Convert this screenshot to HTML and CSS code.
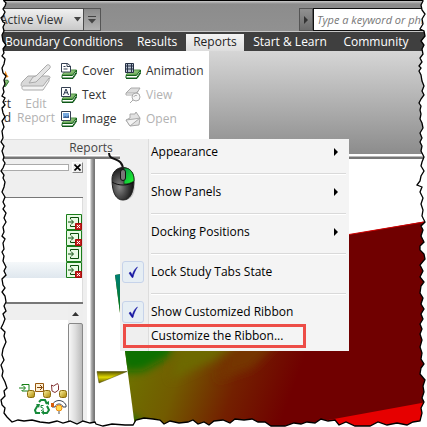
FILE: index.html
```html
<!DOCTYPE html>
<html lang="en">
<head>
<meta charset="utf-8">
<title>Reports</title>
<link rel="stylesheet" href="styles.css">
</head>
<body>
<svg class="defs" aria-hidden="true">
  <defs>
    <linearGradient id="pad" x1="0" y1="0" x2="1" y2="1"><stop offset="0" stop-color="#b5dca0"/><stop offset="1" stop-color="#5a9e47"/></linearGradient>
    <linearGradient id="coin" x1="0" y1="0" x2="1" y2="1"><stop offset="0" stop-color="#fff3a0"/><stop offset="1" stop-color="#a98500"/></linearGradient>
    <symbol id="book" viewBox="0 0 16 16">
      <path d="M5 7h10.500l-4 5H1z" fill="url(#pad)" stroke="#4c8f45"/>
      <path d="M1 12.500h10.500L15.500 7v2l-4 6H1z" fill="#fff" stroke="#14631a"/>
      <path d="M1 15.500h11l4-6" fill="none" stroke="#0d5717"/>
    </symbol>
    <symbol id="import" viewBox="0 0 16 16">
      <path d="M.5.500h15v15H.5z" fill="#e8fae4" stroke="#1a7d1a"/>
      <path d="M4.500 5V3.500h8v9h-8V11M2 8h5M5 5.500L7.500 8 5 10.500" fill="none" stroke="#0b4d0b"/>
    </symbol>
    <symbol id="fail" viewBox="0 0 16 16">
      <path d="M9.500 9.500h6v6h-6z" fill="#c52020" stroke="#a80d0d"/>
      <path d="M11 11l3 3M14 11l-3 3" stroke="#fff"/>
    </symbol>
    <symbol id="gold" viewBox="0 0 8 8"><rect x=".5" y=".5" width="7" height="7" rx="2" fill="url(#coin)" stroke="#8a6a0c"/></symbol>
    <symbol id="arrow" viewBox="0 0 4 8"><path d="M0 0l4 4-4 4z" fill="#000"/></symbol>
    <symbol id="tick" viewBox="0 0 20 20"><path d="M6 11l1.500-1 1.800 3.200C10 10 12 6.500 14.500 5 12.500 8 10.800 11.500 10 15.500H9z" fill="#1414a0" stroke="#1414a0" stroke-width=".5"/></symbol>
  </defs>
</svg>

<div class="app">
  <header class="titlebar">
    <div class="combo">
      <select aria-label="View"><option>Active View</option></select>
      <svg class="caret" viewBox="0 0 7 5"><path d="M0 0h7L3.500 4.500z" fill="#444"/></svg>
      <button class="more" aria-label="More commands"><svg viewBox="0 0 8 8"><path d="M0 .500h8" stroke="#444"/><path d="M0 3h8L4 7.500z" fill="#444"/></svg></button>
    </div>
    <div class="search">
      <button aria-label="Expand search"><svg viewBox="0 0 4 8"><path d="M0 0l4 4-4 4z" fill="#333"/></svg></button>
      <input type="text" aria-label="Search" placeholder="Type a keyword or phrase">
    </div>
  </header>

  <nav class="tabs">
    <a href="#">Boundary Conditions</a>
    <a href="#">Results</a>
    <a href="#" class="active">Reports</a>
    <a href="#">Start &amp; Learn</a>
    <a href="#">Community</a>
  </nav>

  <section class="ribbon">
    <div class="group">
      <div class="tools">
        <button class="big clipped">
          <svg viewBox="0 0 14 32"><path d="M3 10l3 2 1-4 2 5 2 3-4 1-4 2z" fill="#ef8a1b"/><path d="M0 20h10l1 2-4 6H0z" fill="url(#pad)" stroke="#14631a"/></svg>
          <span>rt<br>d</span>
        </button>
        <button class="big" disabled>
          <svg viewBox="0 0 32 32">
            <path d="M8 15h19c3 0 4 1 2 3l-6 8H4c-4 0-3-3-2-5z" fill="#d9d9d9" stroke="#a9a9a9"/>
            <path d="M3 25c-2 1-1 4 1 4h19l6-9v-3l-6 8H4z" fill="#f4f4f4" stroke="#aaa"/>
            <path d="M9 22l4-6 3-1 11-11c2-1 4 1 3 3L19 18l-3 3z" fill="#e4e4e4" stroke="#aaa"/>
          </svg>
          <span>Edit<br>Report</span>
        </button>
        <div class="smalls">
          <button><svg viewBox="0 0 16 16"><use href="#book"/><path d="M.5.500h6L9.500 3v6h-9z" fill="#fff" stroke="#354052"/><path d="M6 0v3.500h3M2.500 3.500h2M2.500 6h4" fill="none" stroke="#354052"/></svg>Cover</button>
          <button><svg viewBox="0 0 16 16"><use href="#book"/><path d="M.5.500h9v9h-9z" fill="#fff" stroke="#354052"/><path d="M2.500 8L5 2l2.500 6M3.500 5.800h3" fill="none" stroke="#26334a"/></svg>Text</button>
          <button><svg viewBox="0 0 16 16"><use href="#book"/><path d="M.5.500h9v9h-9z" fill="#fff" stroke="#354052"/><path d="M2 2h6v5H2z" fill="#76a9df"/><path d="M2 7l2-2 2 1 2-2v3z" fill="#3a5f94"/></svg>Image</button>
        </div>
        <div class="smalls">
          <button><svg viewBox="0 0 16 16"><use href="#book"/><path d="M.5.500h8v9h-8z" fill="#b9c3d2" stroke="#263145"/><path d="M2.500 0v9M6.500 0v9M0 3h9M0 6h9" fill="none" stroke="#263145"/></svg>Animation</button>
          <button disabled><svg viewBox="0 0 16 16"><path d="M6 1h9l-3 5H1z" fill="#ddd" stroke="#aaa"/><path d="M1 6v2h8l5-5" fill="none" stroke="#aaa"/><circle cx="11" cy="10" r="4" fill="#f6f6f6" stroke="#aaa"/><path d="M9 10c0-2 3-2 3-1M8 13l-3 3" fill="none" stroke="#aaa"/></svg>View</button>
          <button disabled><svg viewBox="0 0 16 16"><path d="M1 9l4-2V3h5l1-2 4 6-1 7-9 1z" fill="#e2e2e2" stroke="#aaa"/><path d="M1 9l4 6 10-8-6 1z" fill="#f4f4f4" stroke="#aaa"/></svg>Open</button>
        </div>
      </div>
      <div class="caption">Reports</div>
    </div>
  </section>

  <main class="work">
    <aside class="dock">
      <div class="grip"><span></span><button aria-label="Close"><svg viewBox="0 0 7 7"><path d="M.5.500l6 6M6.500.500l-6 6" stroke="#000" stroke-width="1.600"/></svg></button></div>
      <ul class="tree">
        <li><svg viewBox="0 0 16 16"><use href="#import"/><use href="#fail"/></svg></li>
        <li><svg viewBox="0 0 16 16"><use href="#import"/><use href="#fail"/></svg></li>
        <li><svg viewBox="0 0 16 16"><use href="#import"/></svg></li>
        <li class="selected"><svg viewBox="0 0 16 16"><use href="#import"/><use href="#fail"/></svg></li>
      </ul>
      <div class="list">
        <div class="content">
          <svg class="status" viewBox="0 0 48 32">
            <path d="M3 3V1.500h7V8H3V7M0 5h6M4 2.500L6.500 5 4 7.500" fill="none" stroke="#168016"/>
            <path d="M16.500.500h8v8h-8z" fill="#fff1d6" stroke="#96580f"/><path d="M18 4.500h5M21 2l2.500 2.500L21 7" fill="none" stroke="#7d4208"/>
            <path d="M32.500 2l2 1 4-2.500 1 2V7L36 9.500 33 8z" fill="#fff" stroke="#853535"/>
            <use href="#gold" x="8" y="7" width="8" height="8"/><use href="#gold" x="24" y="7" width="8" height="8"/><use href="#gold" x="40" y="7" width="8" height="8"/>
            <path d="M20 19l2-2h4l2 4M28 23l2 4-2 3h-4M21 30h-4l-1-3 3-5" fill="none" stroke="#168a3a" stroke-width="2"/>
            <path d="M26 20l4 2v-4zM25 27v5l-3-2.500zM17 21l4 0-1 4z" fill="#168a3a"/>
            <path d="M24.500 22.500h-2.500v2c3-.5 3 3 0 3" fill="none" stroke="#168a3a"/>
            <path d="M33 24v-2c3-6 11-6 14 0v2h-3c-1-4-7-4-8 0z" fill="#fff" stroke="#3b4350"/><path d="M32 20h3v4h-3z" fill="#d75c0a"/>
            <circle cx="40" cy="25" r="3" fill="#ffd94a" stroke="#ef8b12"/><path d="M39 28h2v3h-2z" fill="#a5a5a5"/>
          </svg>
        </div>
        <div class="scroll"><button aria-label="Scroll up"><svg viewBox="0 0 7 4"><path d="M0 4l3.500-4L7 4z" fill="#333"/></svg></button><span></span></div>
      </div>
    </aside>
    <div class="canvas">
      <svg viewBox="95 159 332 268" preserveAspectRatio="xMinYMin slice" role="img" aria-label="Simulation result">
        <defs>
          <linearGradient id="field" gradientUnits="userSpaceOnUse" x1="130" y1="370" x2="280" y2="425"><stop offset="0" stop-color="#6e7100"/><stop offset=".3" stop-color="#725b00"/><stop offset=".65" stop-color="#732000"/><stop offset="1" stop-color="#700000"/></linearGradient>
          <linearGradient id="cone" x1="0" y1="0" x2="0" y2="1"><stop offset="0" stop-color="#555000"/><stop offset=".5" stop-color="#e1d900"/><stop offset="1" stop-color="#5f5900"/></linearGradient>
          <linearGradient id="side" x1="0" y1="0" x2="0" y2="1"><stop offset="0" stop-color="#008080"/><stop offset=".5" stop-color="#007a28"/><stop offset="1" stop-color="#087000"/></linearGradient>
          <filter id="soft" x="-50%" y="-50%" width="200%" height="200%"><feGaussianBlur stdDeviation="5"/></filter>
          <clipPath id="body"><path d="M115 275L427 221V427H135z"/></clipPath>
        </defs>
        <g clip-path="url(#body)">
          <path d="M115 221h312v206H115z" fill="url(#field)"/>
          <path d="M115 270h12v76h-12z" fill="url(#side)"/>
          <g filter="url(#soft)">
            <path d="M115 340h62l-8 17-26 14-20 1z" fill="#087000"/>
            <path d="M180 340h60l-25 20-45 20z" fill="#6d6900"/>
            <path d="M236 340h44l-28 28-36 12z" fill="#743600"/>
            <path d="M124 420l10-5 8 12h-12z" fill="#087000"/>
          </g>
          <path d="M290 427l137-25v30z" fill="#e60000"/>
        </g>
        <path d="M349 234.500L427 221.500" stroke="#d00000"/>
        <path d="M97 371.500h30L99 383z" fill="url(#cone)" stroke="#4c4800" stroke-width=".5"/>
      </svg>
    </div>
  </main>
</div>

<div class="menu" role="menu">
  <button role="menuitem"><i></i>Appearance<svg viewBox="0 0 4 8"><use href="#arrow"/></svg></button>
  <hr>
  <button role="menuitem"><i></i>Show Panels<svg viewBox="0 0 4 8"><use href="#arrow"/></svg></button>
  <hr>
  <button role="menuitem"><i></i>Docking Positions<svg viewBox="0 0 4 8"><use href="#arrow"/></svg></button>
  <hr>
  <button role="menuitemcheckbox" aria-checked="true"><i class="on"><svg viewBox="0 0 20 20"><use href="#tick"/></svg></i>Lock Study Tabs State</button>
  <hr>
  <button role="menuitemcheckbox" aria-checked="true"><i class="on"><svg viewBox="0 0 20 20"><use href="#tick"/></svg></i>Show Customized Ribbon</button>
  <button role="menuitem" class="marked"><i></i>Customize the Ribbon...</button>
</div>

<svg class="mouse" viewBox="0 0 30 50" aria-hidden="true">
  <defs>
    <radialGradient id="shell" cx=".35" cy=".6" r=".6"><stop offset="0" stop-color="#898989"/><stop offset=".5" stop-color="#4b4b4b"/><stop offset="1" stop-color="#161616"/></radialGradient>
    <linearGradient id="green" x1="0" y1="0" x2="1" y2="1"><stop offset="0" stop-color="#059a48"/><stop offset="1" stop-color="#22ff2c"/></linearGradient>
  </defs>
  <path d="M14 18c8-2 13 5 13 15s-4 16-12 15z" fill="#000" opacity=".15"/>
  <path d="M1 1c0 9 14 3 14 17" fill="none" stroke="#111" stroke-width="2"/>
  <path d="M4 27C4 20 9 15.500 15 15.500S26 20 26 27c0 14-4 21-11 21S4 41 4 27z" fill="url(#shell)" stroke="#222"/>
  <path d="M16 16c6 0 10 4 10 13-3 2-6 3-10 3z" fill="url(#green)" stroke="#123d13" stroke-width=".7"/>
  <path d="M4 30c6 4 16 4 22 0" fill="none" stroke="#111"/>
  <rect x="12.500" y="17.500" width="5" height="11" rx="2.500" fill="#777" stroke="#111"/>
</svg>

<svg class="torn" viewBox="0 0 427 427" preserveAspectRatio="none" aria-hidden="true">
  <path d="M-2 -2H3L4 1 6 3 5 6 3 9 5 12 3 16 1 18 3 22 5 23 3 27 4 31 2 35 3 41 6 45 3 49 4 53 2 56 5 59 4 64 2 68 3 73 6 76 4 80 5 84 3 88 4 92 2 96 5 98 3 102 5 105 2 108 3 113 5 117 2 121 4 127 2 131 3 138 1 142 4 146 2 151 4 157 3 160 5 163 3 168 1 171 4 175 3 178 5 182 4 187 2 192 5 197 3 202 5 206 3 209 6 213 4 218 6 222 3 227 4 232 2 236 5 239 3 243 4 249 2 252 4 256 3 261 6 267 4 271 6 275 2 279 3 285 5 288 2 292 5 296 6 302 4 306 6 311 3 314 5 319 3 324 1 328 5 332 4 336 6 342 3 349 2 355 4 360 1 365 3 371 2 376 5 382 7 388 4 391 5 396 1 400 2 405 5 408 4 413 7 417 12 422 18 420 24 421 32 420 40 422 49 423 57 421 63 423 70 421 77 424 83 421 90 423 95 422 96 424 103 426 112 424 125 425 133 425 136 420 144 418 153 419 160 420 164 424 170 421 179 423 188 422 193 420 198 424 204 422 209 425 214 421 223 420 230 423 235 419 244 420 252 419 258 422 265 422 271 426 285 426 294 423 301 424 307 422 315 423 321 419 328 421 335 420 339 425 346 422 355 426 370 426 378 422 387 425 397 423 407 425 413 422 420 421 422 413 421 408 424 402 422 398 424 392 423 386 425 380 420 374 421 368 424 364 421 359 422 353 420 347 422 340 420 334 422 329 420 324 423 319 421 314 424 309 421 304 423 298 420 293 421 286 424 282 420 277 423 271 420 265 425 259 424 254 420 250 420 246 424 242 421 236 423 230 421 226 425 222 422 216 423 210 421 204 423 198 420 192 422 187 417 185 420 181 421 176 424 171 421 166 422 162 424 157 421 151 422 146 420 142 422 138 420 133 423 128 422 123 420 119 421 114 420 110 421 106 419 103 421 99 424 95 422 91 424 86 422 81 421 75 419 71 421 68 419 66 422 62 420 58 423 54 422 49 424 45 421 41 425 36 424 31 420 29 423 24 422 19 425 14 422 10 421 5 423 1 422 -2H430V430H-3z" fill="#fff" stroke="#000" stroke-width="1.300"/>
</svg>
</body>
</html>
```
FILE: styles.css
```css
* { box-sizing: border-box; }
body {
  margin: 0;
  overflow: hidden;
  font: 12px/16px "Open Sans", "Noto Sans", sans-serif;
  color: #111;
  background: #fff;
}
button, input, select { font: inherit; color: inherit; margin: 0; padding: 0; border: 0; border-radius: 0; background: none; }
svg { display: block; flex: none; }
.defs { position: absolute; width: 0; height: 0; }
.app { display: flex; flex-direction: column; height: 100vh; }

.titlebar {
  display: flex;
  justify-content: space-between;
  align-items: flex-end;
  height: 32px;
  flex: none;
  border-top: 1px solid #000;
  border-bottom: 1px solid #c6c6c6;
  background: linear-gradient(#c9c9c9, #8c8c8c 3px, #919191);
}
.combo { position: relative; display: flex; height: 23px; }
.combo select { appearance: none; width: 84px; border: 1px solid #4b4b4b; border-left: 0; background: linear-gradient(#f1f1f1, #c9c9c9); color: #333; }
.combo .caret { position: absolute; left: 74px; top: 9px; width: 7px; height: 5px; }
.more { width: 17px; border: 1px solid #555; border-left: 0; background: linear-gradient(#8b8b8b, #b2b2b2); display: grid; place-items: center; }
.more svg { width: 8px; height: 8px; }
.search { display: flex; width: 128px; height: 23px; }
.search button { width: 14px; flex: none; border: 1px solid #555; background: linear-gradient(#919191, #6c6c6c); display: grid; place-items: center; }
.search button svg { width: 4px; height: 8px; }
.search input { min-width: 0; flex: 1; padding-left: 3px; border: 1px solid #111; background: #fff; font-size: 11px; font-style: italic; }
.search input::placeholder { color: #777; opacity: 1; }

.tabs { display: grid; grid-template-columns: 128px 58px 58px 92px 80px; height: 19px; flex: none; padding-top: 2px; background: #3f3f3f; }
.tabs a { color: #fff; text-align: center; text-decoration: none; white-space: nowrap; line-height: 15px; }
.tabs a.active { color: #222; background: linear-gradient(#f4f4f4, #ddd); }

.ribbon { flex: none; height: 108px; border-bottom: 1px solid #777; background: linear-gradient(#d6d6d6, #8c8c8c 103px, #fff 103px, #fff 105px, #777 106px); }
.group { width: 209px; background: #fff; color: #333; }
.tools { display: flex; height: 88px; padding-top: 8px; }
.tools button { white-space: nowrap; }
.tools button:disabled { color: #b2b2b2; }
.big { width: 44px; display: flex; flex-direction: column; align-items: center; line-height: 14px; }
.big svg { width: 32px; height: 32px; margin: 2px 0 4px; }
.big.clipped { width: 14px; align-items: flex-end; padding-right: 3px; text-align: right; }
.clipped svg { width: 11px; }
.smalls { width: 64px; padding-left: 3px; }
.smalls button { display: flex; align-items: center; gap: 5px; height: 24px; }
.smalls svg { width: 16px; height: 16px; }
.caption { height: 16px; padding-left: 62px; width: 120px; text-align: center; background: #efefef; border-top: 1px solid #ddd; color: #444; }

.work { flex: 1; display: flex; min-height: 0; }
.dock { width: 95px; flex: none; display: flex; flex-direction: column; padding-right: 12px; background: linear-gradient(90deg, #efefef 87px, #fff 87px, #fff 90px, #bbb 91px, #777 94px, #777); }
.grip { height: 39px; flex: none; padding-top: 3px; display: flex; align-items: flex-start; gap: 3px; border-bottom: 1px solid #777; }
.grip span { flex: 1; height: 7px; margin-top: 2px; border: 1px solid #aaa; border-left: 0; background: #fff; }
.grip button { width: 11px; height: 11px; border: 1px solid #888; border-top-color: #fff; border-left-color: #fff; display: grid; place-items: center; }
.grip svg { width: 7px; height: 7px; }
.tree { height: 104px; flex: none; margin: 0; padding: 16px 0 0; list-style: none; background: #fff; border-right: 1px solid #ddd; }
.tree li { height: 16px; display: flex; justify-content: flex-end; }
.tree svg { width: 16px; height: 16px; }
.tree .selected { background: linear-gradient(#f5f8fa, #dfe7ee); }
.list { flex: 1; min-height: 0; display: flex; border-top: 2px solid #777; background: #fff; }
.content { flex: 1; padding: 63px 1px 0 0; display: flex; justify-content: flex-end; align-items: flex-start; border-top: 16px solid #efefef; }
.status { width: 48px; height: 32px; }
.scroll { width: 15px; display: flex; flex-direction: column; background: #eee; }
.scroll button { height: 19px; display: grid; place-items: center; }
.scroll button svg { width: 7px; height: 4px; }
.scroll span { flex: 1; border: 1px solid #888; border-radius: 2px; background: linear-gradient(90deg, #f7f7f7, #ddd 50%, #bbb); }
.canvas { flex: 1; min-width: 0; background: #fff; }
.canvas svg { width: 100%; height: 100%; }

.menu { position: absolute; left: 120px; top: 139px; width: 229px; padding: 1px 0 3px; background: linear-gradient(90deg, #efefef 28px, #ddd 28px, #ddd 29px, #f4f4f4 29px); }
.menu button { width: 100%; height: 24px; display: flex; align-items: center; padding-right: 11px; text-align: left; white-space: nowrap; color: #000; }
.menu i { width: 22px; height: 22px; flex: none; margin: 0 7px 0 2px; }
.menu i.on { border: 1px solid #c6d3ea; border-radius: 3px; background: #e6eef4; }
.menu i svg { width: 20px; height: 20px; }
.menu button > svg { width: 4px; height: 8px; margin-left: auto; }
.menu hr { height: 2px; margin: 9px 3px 5px 31px; border: 0; border-top: 1px solid #d9d9d9; border-bottom: 1px solid #fff; }
.menu .marked { width: 183px; margin-left: 3px; border: 3px solid #ed4d47; }
.menu .marked i { margin: 0 3px 0 0; }

.mouse { position: absolute; left: 108px; top: 152px; width: 30px; height: 50px; }
.torn { position: absolute; left: 0; top: 0; width: 100%; height: 100%; pointer-events: none; }
```
